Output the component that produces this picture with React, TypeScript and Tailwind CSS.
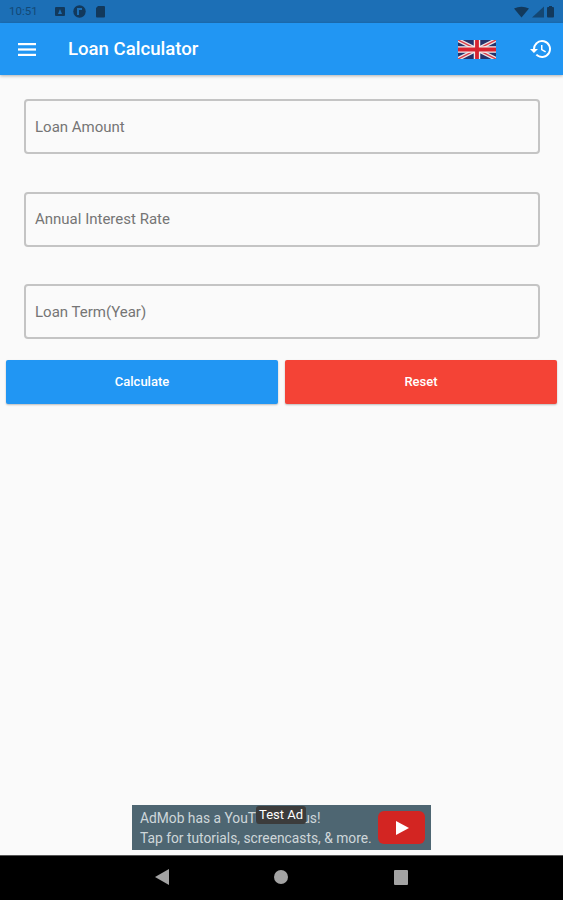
import React from "react";

const fields = ["Loan Amount", "Annual Interest Rate", "Loan Term(Year)"];

const UkFlag = () => (
  <svg width="38" height="19" viewBox="0 0 38 19" className="shrink-0">
    <rect width="38" height="19" fill="#27336b" />
    <path d="M0 0L38 19M38 0L0 19" stroke="#ece6e8" strokeWidth="4" />
    <path d="M0 0L38 19M38 0L0 19" stroke="#d8404c" strokeWidth="1.5" />
    <path d="M19 0V19M0 9.5H38" stroke="#f3eeee" strokeWidth="6.5" />
    <path d="M19 0V19M0 9.5H38" stroke="#d8232f" strokeWidth="3.8" />
  </svg>
);

const HistoryIcon = () => (
  <svg width="24" height="24" viewBox="0 0 24 24" fill="#fff">
    <path d="M13 3a9 9 0 0 0-9 9H1l3.89 3.89.07.14L9 12H6a7 7 0 1 1 2.05 4.95l-1.42 1.42A9 9 0 1 0 13 3zm-1 5v5l4.28 2.54.72-1.21-3.5-2.08V8H12z" />
  </svg>
);

const MenuIcon = () => (
  <svg width="18" height="13" viewBox="0 0 18 13" fill="#fff" className="shrink-0">
    <rect width="18" height="2.2" y="0" />
    <rect width="18" height="2.2" y="5.4" />
    <rect width="18" height="2.2" y="10.8" />
  </svg>
);

const StatusBar = () => (
  <div className="flex h-[23px] items-center justify-between bg-[#1c6fb6] pl-[9px] pr-[8px] text-[#123f66]">
    <div className="flex items-center">
      <span className="w-[45px] text-[11.5px] opacity-80">10:51</span>
      <svg width="54" height="13" viewBox="0 0 54 13" fill="#12395c">
        <rect x="1" y="2" width="10" height="9" rx="1" />
        <path d="M4 9l2-5 2 5z" fill="#1c6fb6" />
        <circle cx="25.5" cy="6.5" r="6.2" />
        <path d="M23 3h5v2h-3v5h-2z" fill="#1c6fb6" />
        <path d="M42 3l2-2h6a1 1 0 0 1 1 1v9.5a1 1 0 0 1-1 1h-7a1 1 0 0 1-1-1z" />
      </svg>
    </div>
    <svg width="41" height="12" viewBox="0 0 41 12" fill="#12395c">
      <path d="M0 2.5Q7.5-1 15 2.5L7.5 11.5z" />
      <path d="M18 11.5L30 .5v11z" opacity="0.75" />
      <rect x="33" y="1" width="7" height="10.5" rx="1" />
      <rect x="35" y="0" width="3" height="1.5" />
    </svg>
  </div>
);

const AppBar = () => (
  <header className="flex h-[52px] items-center bg-[#2196f3] pl-[18px] text-white shadow-[0_1px_3px_rgba(0,0,0,0.3)]">
    <MenuIcon />
    <h1 className="ml-[32px] flex-1 pt-[2px] text-[18.6px] font-medium">Loan Calculator</h1>
    <UkFlag />
    <div className="ml-[33px] mr-[10px] flex">
      <HistoryIcon />
    </div>
  </header>
);

const AdBanner = () => (
  <div className="relative mx-auto flex h-[45px] w-[299px] items-center bg-[#4e6672] pl-[8px] text-[13.8px] leading-[20px] text-[#cfd7da]">
    <div className="whitespace-nowrap">
      <p>AdMob has a YouTube for us!</p>
      <p>Tap for tutorials, screencasts, &amp; more.</p>
    </div>
    <div className="absolute right-[6px] top-[6px] flex h-[33px] w-[47px] items-center justify-center rounded-[6px] bg-[#d32522]">
      <svg width="14" height="14" viewBox="0 0 14 14" fill="#fff">
        <path d="M1 0l13 7-13 7z" />
      </svg>
    </div>
    <span className="absolute left-[124px] top-[1px] rounded-[3px] bg-[#3c3c3c] px-[3px] text-[13px] leading-[18px] text-white">
      Test Ad
    </span>
  </div>
);

const NavBar = () => (
  <nav className="flex h-[45px] items-center border-t border-[#555] bg-black pb-[2px]">
    <div className="ml-[155px] flex">
      <svg width="14" height="16" viewBox="0 0 14 16" fill="#a3a3a3">
        <path d="M14 0v16L0 8z" />
      </svg>
    </div>
    <div className="ml-[105px] h-[14px] w-[14px] rounded-full bg-[#a3a3a3]" />
    <div className="ml-[106px] h-[15px] w-[14px] rounded-[1px] bg-[#a3a3a3]" />
  </nav>
);

export default function App() {
  return (
    <div className="flex h-[900px] w-[563px] flex-col overflow-hidden bg-[#fafafa] font-[Roboto,sans-serif]">
      <StatusBar />
      <AppBar />
      <main className="flex flex-1 flex-col">
        <div className="flex flex-col gap-[37.5px] pl-[24px] pr-[23px] pt-[24px]">
          {fields.map((label) => (
            <div
              key={label}
              className="flex h-[55px] items-center rounded-[4px] border-2 border-[#c4c4c4] pl-[9px] pt-[1px] text-[15px] text-[#757575]"
            >
              {label}
            </div>
          ))}
        </div>
        <div className="mt-[20.5px] flex gap-[7px] px-[6px]">
          <button className="h-[44px] flex-1 rounded-[2px] bg-[#2196f3] text-[13px] font-medium text-white shadow-[0_1px_2px_rgba(0,0,0,0.25)]">
            Calculate
          </button>
          <button className="h-[44px] flex-1 rounded-[2px] bg-[#f44336] text-[13px] font-medium text-white shadow-[0_1px_2px_rgba(0,0,0,0.25)]">
            Reset
          </button>
        </div>
        <div className="mt-auto pb-[5px]">
          <AdBanner />
        </div>
      </main>
      <NavBar />
    </div>
  );
}
